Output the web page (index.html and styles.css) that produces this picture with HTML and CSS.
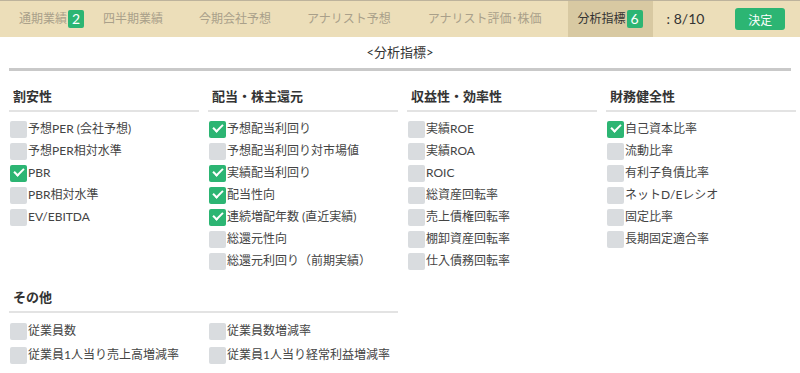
FILE: index.html
```html
<!DOCTYPE html>
<html lang="ja">
<head>
    <meta charset="UTF-8">
    <title>分析指標</title>
    <link rel="stylesheet" href="styles.css">
</head>
<body>
    <div class="tabbar">
        <div class="tab">通期業績<span class="badge">2</span></div>
        <div class="tab">四半期業績</div>
        <div class="tab">今期会社予想</div>
        <div class="tab">アナリスト予想</div>
        <div class="tab">アナリスト評価･株価</div>
        <div class="tab active">分析指標<span class="badge">6</span></div>
        <div class="count">: 8/10</div>
        <button class="decide">決定</button>
    </div>

    <div class="title">&lt;分析指標&gt;</div>
    <div class="rule"></div>

    <div class="groups">
        <div class="group">
            <h3>割安性</h3>
            <label class="item"><span class="box"></span>予想PER (会社予想)</label>
            <label class="item"><span class="box"></span>予想PER相対水準</label>
            <label class="item"><span class="box on"></span>PBR</label>
            <label class="item"><span class="box"></span>PBR相対水準</label>
            <label class="item"><span class="box"></span>EV/EBITDA</label>
        </div>
        <div class="group">
            <h3>配当・株主還元</h3>
            <label class="item"><span class="box on"></span>予想配当利回り</label>
            <label class="item"><span class="box"></span>予想配当利回り対市場値</label>
            <label class="item"><span class="box on"></span>実績配当利回り</label>
            <label class="item"><span class="box on"></span>配当性向</label>
            <label class="item"><span class="box on"></span>連続増配年数 (直近実績)</label>
            <label class="item"><span class="box"></span>総還元性向</label>
            <label class="item"><span class="box"></span>総還元利回り（前期実績）</label>
        </div>
        <div class="group">
            <h3>収益性・効率性</h3>
            <label class="item"><span class="box"></span>実績ROE</label>
            <label class="item"><span class="box"></span>実績ROA</label>
            <label class="item"><span class="box"></span>ROIC</label>
            <label class="item"><span class="box"></span>総資産回転率</label>
            <label class="item"><span class="box"></span>売上債権回転率</label>
            <label class="item"><span class="box"></span>棚卸資産回転率</label>
            <label class="item"><span class="box"></span>仕入債務回転率</label>
        </div>
        <div class="group">
            <h3>財務健全性</h3>
            <label class="item"><span class="box on"></span>自己資本比率</label>
            <label class="item"><span class="box"></span>流動比率</label>
            <label class="item"><span class="box"></span>有利子負債比率</label>
            <label class="item"><span class="box"></span>ネットD/Eレシオ</label>
            <label class="item"><span class="box"></span>固定比率</label>
            <label class="item"><span class="box"></span>長期固定適合率</label>
        </div>

        <div class="group wide">
            <h3>その他</h3>
            <div class="pair">
                <label class="item"><span class="box"></span>従業員数</label>
                <label class="item"><span class="box"></span>従業員数増減率</label>
                <label class="item"><span class="box"></span>従業員1人当り売上高増減率</label>
                <label class="item"><span class="box"></span>従業員1人当り経常利益増減率</label>
            </div>
        </div>
    </div>
</body>
</html>
```

FILE: styles.css
```css
body {
    margin: 0;
    font-family: Lato, "Noto Sans CJK JP", sans-serif;
    font-size: 12px;
    line-height: 20px;
    color: #444;
    background: #fff;
}

.tabbar {
    display: flex;
    align-items: stretch;
    height: 36px;
    border-top: 1px solid #bdb39c;
    background-color: #ecdeb9;
    padding-left: 19px;
    white-space: nowrap;
}

.tab {
    display: flex;
    align-items: center;
    flex: none;
    color: #a9a08a;
}

.tab:nth-child(1) { margin-right: 19px; }
.tab:nth-child(2) { margin-right: 36px; }
.tab:nth-child(3) { margin-right: 36px; }
.tab:nth-child(4) { margin-right: 37px; }
.tab:nth-child(5) { margin-right: 26px; }

.tab.active {
    padding: 0 10px;
    background-color: #d8c9a2;
    color: #333;
}

.badge {
    display: inline-flex;
    align-items: center;
    justify-content: center;
    width: 16px;
    height: 18px;
    margin-left: 1px;
    border-radius: 2px;
    background-color: #2cb573;
    color: #fff;
    font-size: 14px;
}

.count {
    display: flex;
    align-items: center;
    flex: none;
    padding-left: 14px;
    font-size: 14px;
    color: #333;
}

.decide {
    align-self: center;
    flex: none;
    margin-left: 31px;
    width: 50px;
    height: 22px;
    border: none;
    border-radius: 3px;
    background-color: #2cb573;
    color: #fff;
    font-family: inherit;
    font-size: 12px;
}

.title {
    text-align: center;
    color: #333;
    font-size: 13px;
    margin-top: 5px;
}

.rule {
    height: 3px;
    margin: 6px 9px 0;
    background-color: #c9c9c9;
}

.groups {
    display: grid;
    grid-template-columns: repeat(4, 190px);
    column-gap: 9px;
    padding: 0 9px;
}

.group h3 {
    margin: 16px 0 6px;
    padding: 0 4px 5px;
    border-bottom: 2px solid #e3e3e3;
    font-size: 13px;
    line-height: 18px;
    color: #333;
}

.group.wide {
    grid-column: span 2;
}

.pair {
    display: grid;
    grid-template-columns: repeat(2, 190px);
    column-gap: 9px;
}

.item {
    display: flex;
    align-items: center;
    height: 22px;
    padding-left: 1px;
    white-space: nowrap;
}

.pair .item {
    height: 24px;
}

.box {
    position: relative;
    width: 17px;
    height: 17px;
    margin-right: 1px;
    border-radius: 2px;
    background-color: #d9dcdf;
    flex: none;
}

.box.on {
    background-color: #2cb573;
}

.box.on::after {
    content: "";
    position: absolute;
    left: 4px;
    top: 3px;
    width: 8px;
    height: 4px;
    border-left: 2px solid #fff;
    border-bottom: 2px solid #fff;
    transform: rotate(-45deg);
}
```
